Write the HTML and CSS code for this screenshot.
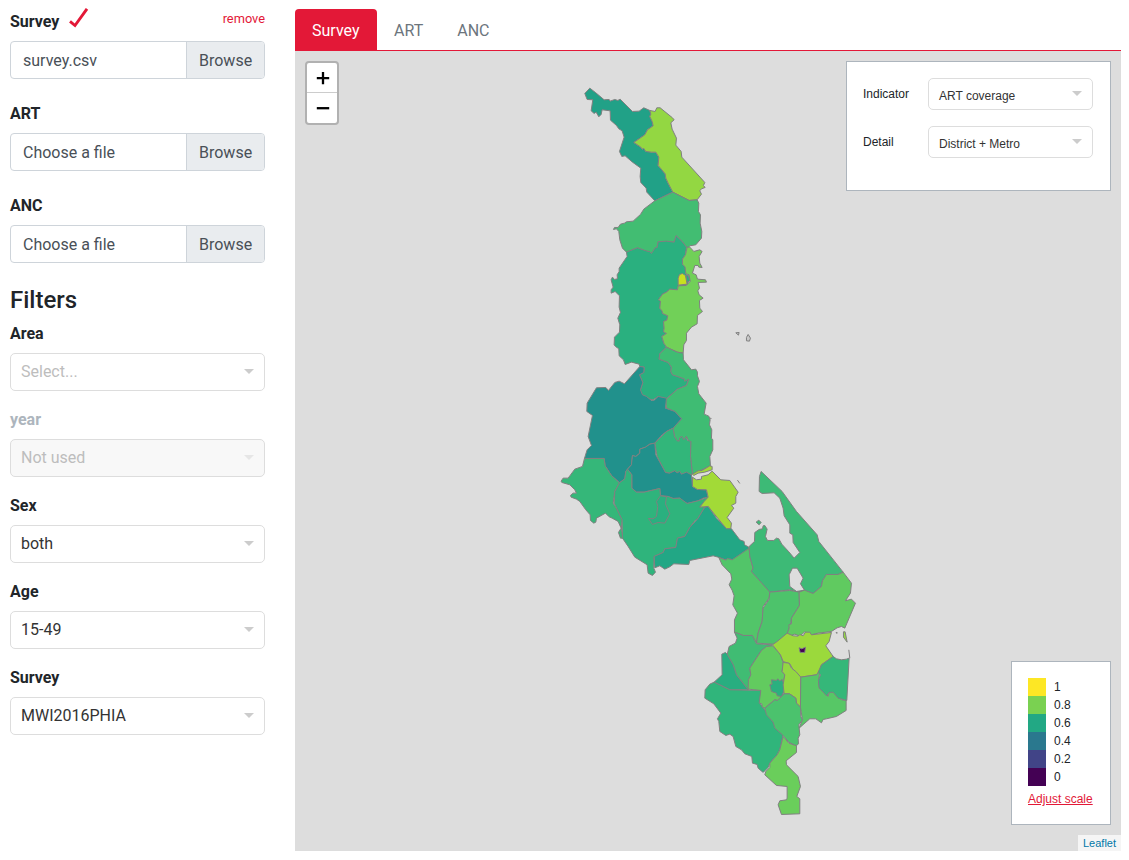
FILE: index.html
```html
<!DOCTYPE html>
<html lang="en">
<head>
<meta charset="utf-8">
<title>Survey map</title>
<link rel="stylesheet" href="styles.css">
</head>
<body>
<div class="page">
  <aside class="sidebar">
    <section class="upload">
      <div class="label-row"><label class="label">Survey</label><svg class="tick" width="20" height="20" viewBox="0 0 20 20"><path d="M1 13.3 6 17.5 18 .8" fill="none" stroke="#e31837" stroke-width="2.9"/></svg><a class="remove">remove</a></div>
      <div class="file"><span class="file-name">survey.csv</span><span class="browse">Browse</span></div>
    </section>
    <section class="upload">
      <div class="label-row"><label class="label">ART</label></div>
      <div class="file"><span class="file-name">Choose a file</span><span class="browse">Browse</span></div>
    </section>
    <section class="upload">
      <div class="label-row"><label class="label">ANC</label></div>
      <div class="file"><span class="file-name">Choose a file</span><span class="browse">Browse</span></div>
    </section>
    <h2 class="heading">Filters</h2>
    <section class="filter"><label class="label">Area</label><div class="select placeholder"><span>Select...</span><i class="arrow"></i></div></section>
    <section class="filter disabled"><label class="label">year</label><div class="select placeholder"><span>Not used</span><i class="arrow"></i></div></section>
    <section class="filter"><label class="label">Sex</label><div class="select"><span>both</span><i class="arrow"></i></div></section>
    <section class="filter"><label class="label">Age</label><div class="select"><span>15-49</span><i class="arrow"></i></div></section>
    <section class="filter"><label class="label">Survey</label><div class="select"><span>MWI2016PHIA</span><i class="arrow"></i></div></section>
  </aside>
  <main class="content">
    <nav class="tabs"><a class="tab active">Survey</a><a class="tab">ART</a><a class="tab">ANC</a></nav>
    <div class="map">
      <svg class="regions" width="826" height="800" viewBox="295 51 826 800">
        <g transform="translate(569.8 79.8) scale(.33333)">
          <path fill="#21a187" d="M45 41 60 25 78 39 103 60 118 59 121 64 135 59 144 62 151 58 188 95 208 94 222 84 240 92 243 103 240 110 247 125 250 138 233 150 225 165 192 188 213 202 217 208 222 206 228 215 245 217 258 217 267 232 265 257 286 282 288 295 295 310 309 337 255 363 231 337 229 325 213 308 211 290 213 265 188 247 166 228 156 230 149 215 163 172 157 153 147 147 140 137 122 121 121 93 97 90 94 104 87 111 79 97 73 101 64 93 69 60 52 59Z"/>
          <path fill="#93d742" d="M240 92 256 95 261 84 271 84 308 114 313 120 303 129 307 148 320 175 318 196 334 215 336 232 405 308 401 317 406 323 395 327 390 333 395 343 382 360 358 362 309 337 295 310 288 295 286 282 265 257 267 232 258 217 245 217 228 215 222 206 217 208 213 202 192 188 225 165 233 150 250 138 247 125 240 110 243 103Z"/>
          <path fill="#42bd72" d="M309 337 358 362 382 360 387 370 386 395 392 405 391 430 396 455 395 475 378 495 360 498 355 504 350 502 337 485 319 468 313 487 265 486 262 503 245 521 203 504 170 517 158 505 150 480 147 455 140 447 131 449 134 443 145 443 152 433 164 430 170 426 190 424 212 404 222 388 255 363Z"/>
        </g>
        <g transform="translate(569.8 229.8) scale(.33333)">
          <path fill="#2ab07f" d="M170 67 203 54 228 63 240 66 245 71 256 54 262 53 265 36 290 34 313 37 319 18 337 35 350 52 347 75 338 88 338 103 346 112 348 132 360 150 350 166 325 168 323 180 300 178 290 187 278 193 266 210 272 214 270 235 277 244 278 251 294 258 291 271 281 275 283 295 281 306 290 311 276 320 282 340 290 352 270 372 268 388 295 398 305 412 303 425 308 435 325 440 343 447 345 454 357 446 350 467 323 478 288 508 265 500 250 510 235 507 218 497 212 490 212 480 219 458 209 435 222 428 223 412 210 410 208 403 185 397 166 404 161 390 148 378 147 357 137 350 133 345 134 322 149 307 150 285 144 265 152 248 148 232 149 198 136 185 124 190 124 180 130 172 124 150 128 142 134 149 143 147 142 135 148 125 148 115 172 80Z"/>
          <path fill="#71d058" d="M352 52 360 52 372 65 390 60 397 65 388 80 390 100 397 113 387 112 385 107 375 107 368 130 379 135 383 148 407 150 410 157 385 158 389 175 384 183 388 195 400 205 389 212 390 235 398 245 383 257 382 282 365 292 350 310 350 332 342 345 340 370 322 367 290 352 282 340 276 320 290 311 281 306 283 295 281 275 291 271 294 258 278 251 277 244 270 235 272 214 266 210 278 193 290 187 300 178 323 180 325 168 350 167 361 155 358 135 348 132 346 112 338 103 338 88 347 75Z"/>
          <path fill="#2ab07f" d="M349 140 355 135 360 153 352 157Z"/>
          <path fill="#c8e020" d="M325 145 329 134 338 131 347 137 352 163 325 166Z"/>
          <path class="islet" d="M498 309 508 308 506 316ZM530 323 535 314 542 325 539 334 530 333Z"/>
        </g>
        <g transform="translate(549.8 359.8) scale(.33333)">
          <path fill="#3fbc73" d="M350 -38 382 -23 400 -20 401 0 425 30 438 28 443 37 443 48 449 65 443 80 447 102 469 130 463 163 477 169 481 180 479 195 486 210 485 235 489 240 489 270 480 290 482 318 428 343 422 290 423 245 418 247 410 230 402 240 396 230 390 234 388 244 382 243 374 230 370 205 395 177 375 155 350 145 347 120 383 88 410 77 417 58 405 64 403 57 368 45 363 35 365 22 355 8 328 -2 330 -18Z"/>
          <path fill="#21918c" d="M283 22 270 20 224 72 208 64 195 68 176 92 168 83 140 84 112 130 111 155 128 167 115 230 125 257 112 270 104 296 163 296 166 318 185 347 209 369 225 357 228 335 233 328 245 315 248 287 258 290 270 280 270 268 287 262 300 253 315 250 335 227 350 215 370 205 395 177 375 155 347 145 350 115 325 110 313 121 305 122 290 110 278 105 272 90 279 68 269 45 282 38Z"/>
          <path fill="#32b67a" d="M315 250 350 215 370 205 374 230 382 243 388 244 390 234 396 230 402 240 410 230 412 241 423 245 422 290 428 343 410 347 395 343 390 335 382 339 375 333 359 340 347 338 322 290Z"/>
          <path fill="#21918c" d="M315 250 318 285 347 338 359 340 375 333 382 339 390 335 395 343 410 337 425 345 428 380 443 389 470 390 475 412 460 415 445 423 412 431 402 425 390 415 370 416 355 410 332 408 330 386 283 397 260 397 246 385 246 345 233 328 245 315 248 287 258 290 270 280 270 268 287 262 300 253Z"/>
          <path fill="#35b779" d="M104 296 163 296 166 318 185 347 209 369 195 395 190 430 203 450 217 480 215 505 219 535 212 535 206 518 214 505 205 485 187 475 178 471 167 460 140 475 138 487 132 490 122 482 121 465 108 450 90 425 80 418 64 412 62 407 70 400 80 400 75 390 60 375 36 368 34 364 40 355 55 355 75 328 98 320Z"/>
          <path fill="#2fb47c" d="M209 369 225 357 228 335 233 328 246 345 246 385 260 397 283 397 330 386 332 408 355 410 370 416 390 415 412 431 445 423 475 412 475 420 450 440 465 442 445 475 435 483 420 503 405 530 383 535 378 563 345 567 340 578 313 590 312 625 317 637 308 647 295 640 292 615 255 592 235 560 218 535 217 480 193 430 195 395Z"/>
          <path fill="#2ab07f" d="M332 408 350 411 347 432 360 462 345 490 325 488 308 494 296 476 310 477 320 470 324 440 320 425Z"/>
          <path fill="#a2da37" d="M428 343 445 333 457 332 480 318 487 320 487 330 465 337 445 340 432 347ZM428 352 440 360 455 358 455 350 475 345 487 334 513 360 540 362 565 397 558 410 558 430 545 437 552 445 532 473 545 490 543 507 530 507 475 440 450 442 463 425 475 412 470 390 443 389 428 380Z"/>
          <path fill="#22a785" d="M465 442 475 440 500 475 530 507 545 507 570 540 583 545 584 555 597 562 598 568 550 602 540 597 535 603 505 592 490 588 420 602 417 614 372 612 360 621 345 628 330 618 315 624 313 590 340 578 345 567 378 563 383 535 405 530 420 503 445 475Z"/>
          <path fill="none" d="M563 361 570 371M480 175 485 176"/>
        </g>
        <g transform="translate(699.8 459.8) scale(.33333)">
          <path fill="#52c569" d="M148 265 97 300 82 296 79 301 57 293 67 315 93 342 96 358 88 375 97 391 103 408 99 435 113 460 104 480 104 517 130 527 155 527 170 548 175 520 187 485 190 440 208 415 210 395 155 335 160 325 150 290Z"/>
          <path fill="#3dba76" fill-rule="evenodd" d="M148 260 164 245 165 218 178 209 188 207 190 198 195 197 202 208 197 230 203 242 222 242 230 235 237 237 246 253 267 276 283 295 300 278 280 248 279 225 270 220 270 195 253 168 250 145 240 115 223 99 187 101 178 95 179 50 184 35 247 95 290 155 352 225 357 245 430 337 415 344 380 344 368 363 365 380 340 401 320 396 298 397 270 390 210 397 155 335 160 325 150 290ZM268 345 278 325 292 325 310 355 302 372 314 391 290 395 270 380Z"/>
          <path fill="#4dc36b" d="M210 397 270 392 298 397 299 437 275 475 272 495 262 522 240 545 220 553 170 550 175 520 187 485 190 445 208 418Z"/>
          <path fill="#60ca60" d="M298 397 314 391 340 401 365 380 368 363 380 344 415 344 430 337 455 370 452 400 437 423 455 418 467 430 435 505 425 500 412 504 395 515 355 520 330 526 315 516 300 529 285 523 275 527 262 522 268 505 267 495 275 492 275 475 299 437Z"/>
          <path fill="#3dba76" d="M169 187 177 181 184 188 178 195Z"/>
          <path fill="#93d742" d="M431 516 436 516 442 547 431 532Z"/>
          <path class="islet" d="M409 518 412 518 411 521Z"/>
        </g>
        <g transform="translate(689.8 619.8) scale(.33333)">
          <path fill="#40bc73" d="M134 37 160 47 188 47 200 72 248 75 215 92 180 145 183 165 175 210 140 165 130 135 112 105 118 80 137 70 142 55Z"/>
          <path fill="#28ae80" d="M112 103 130 135 140 165 175 210 120 210 73 187 97 165 96 103 107 98Z"/>
          <path fill="#30b57b" d="M73 187 120 210 213 212 210 250 225 270 255 315 280 345 270 390 262 405 240 430 235 443 220 458 205 445 202 434 188 430 186 410 165 402 155 390 138 380 130 350 120 343 108 347 90 335 87 305 83 297 93 280 72 252 45 235 46 210 60 193Z"/>
          <path fill="#62cb5f" d="M248 78 265 95 272 105 280 128 277 155 285 165 280 195 280 228 263 242 255 240 225 265 217 262 216 252 208 250 213 212 175 208 176 180 183 165 180 145 215 92 230 80Z"/>
          <path fill="#2ab07f" d="M240 195 247 193 245 180 260 182 264 177 270 184 277 179 281 190 282 215 275 230 262 228 260 220 245 215Z"/>
          <path fill="#9bd93c" d="M248 75 262 65 292 40 310 48 325 49 330 44 340 48 347 37 360 37 365 45 425 38 418 65 408 78 430 110 395 135 392 150 380 165 333 172 310 150 300 132 280 125 272 105Z"/>
          <path fill="#93d742" d="M280 128 298 130 305 145 318 155 333 172 332 262 320 250 318 235 299 222 283 222 280 195 285 165 277 155Z"/>
          <path fill="#4bc26d" d="M225 265 255 240 263 242 283 222 299 222 318 235 320 250 332 262 333 290 338 300 327 315 330 345 325 355 326 372 320 378 298 368 278 345 255 325 250 307 230 285Z"/>
          <path fill="#57c766" d="M333 172 380 165 390 152 386 190 390 208 405 215 415 230 418 218 430 215 455 240 469 242 469 272 440 290 410 297 400 299 395 309 378 297 360 297 328 325 338 300 332 262Z"/>
          <path fill="#35b779" d="M430 110 440 117 455 120 470 118 478 115 471 242 445 235 430 217 418 218 410 228 403 220 388 205 386 182 392 165 385 157 395 135Z"/>
          <path fill="#6ace5b" d="M280 350 297 370 320 378 320 398 289 423 290 435 325 470 332 500 321 530 330 537 330 582 275 584 265 555 270 543 290 540 292 535 292 500 260 497 225 465 228 455 240 443 240 430 262 405 270 390Z"/>
          <path fill="#440154" d="M328 84 336 87 347 82 345 98 331 98Z"/>
          <path fill="none" d="M477 90 480 115"/>
        </g>
      </svg>
      <div class="zoom"><a class="zoom-btn"><svg width="30" height="30" viewBox="0 0 30 30"><path d="M9.8 15.2H22.2M16 9V21.3" stroke="#000" stroke-width="2.3"/></svg></a><a class="zoom-btn"><svg width="30" height="30" viewBox="0 0 30 30"><path d="M9.8 15.2H22.2" stroke="#000" stroke-width="2.3"/></svg></a></div>
      <div class="panel options">
        <div class="option"><span class="option-label">Indicator</span><div class="select small"><span>ART coverage</span><i class="arrow"></i></div></div>
        <div class="option"><span class="option-label">Detail</span><div class="select small"><span>District + Metro</span><i class="arrow"></i></div></div>
      </div>
      <div class="panel legend">
        <div class="level"><i class="swatch s5"></i>1</div>
        <div class="level"><i class="swatch s4"></i>0.8</div>
        <div class="level"><i class="swatch s3"></i>0.6</div>
        <div class="level"><i class="swatch s2"></i>0.4</div>
        <div class="level"><i class="swatch s1"></i>0.2</div>
        <div class="level"><i class="swatch s0"></i>0</div>
        <a class="adjust">Adjust scale</a>
      </div>
      <div class="attribution">Leaflet</div>
    </div>
  </main>
</div>
</body>
</html>
```
FILE: styles.css
```css
* { box-sizing: border-box; }
body { margin: 0; font: 16px/24px Roboto, sans-serif; color: #212529; background: #fff; }
.page { display: grid; grid-template-columns: 255px 826px; column-gap: 30px; padding: 9px 8px 0 10px; height: 860px; overflow: hidden; }
.label { font-weight: 700; line-height: 24px; padding-top: 1px; display: block; }
.upload { height: 92px; }
.label-row { display: flex; height: 32px; }
.tick { margin: -1px 0 0 10px; }
.remove { margin-left: auto; font-size: 12.8px; line-height: 20px; color: #e31837; }
.file { display: flex; height: 38px; border: 1px solid #ced4da; border-radius: 4px; color: #495057; line-height: 38px; overflow: hidden; }
.file-name { flex: 1; padding-left: 12px; }
.browse { width: 78px; padding-left: 12px; background: #e9ecef; border-left: 1px solid #ced4da; }
.heading { margin: 0 0 6px; padding-top: 1px; font-size: 24px; font-weight: 500; line-height: 29px; }
.filter { height: 86px; }
.filter .label { height: 32px; }
.disabled .label { color: #adb5bd; }
.select { display: flex; align-items: center; justify-content: space-between; height: 38px; padding: 0 10px; border: 1px solid #ddd; border-radius: 5px; color: #333; background: #fff; }
.placeholder { color: #bdbdbd; }
.disabled .select { background: #f8f8f8; }
.arrow { border: 5px solid transparent; border-top-color: #ccc; border-bottom: 0; margin-bottom: 1px; }
.disabled .arrow { border-top-color: #e6e6e6; }
.tabs { display: flex; height: 42px; border-bottom: 1px solid #e31837; }
.tab { padding: 9px 16px 8px; border: 1px solid transparent; border-bottom: 0; color: #6c757d; }
.tab.active { width: 82px; background: #e31837; color: #fff; border-radius: 4px 4px 0 0; }
.map { position: relative; height: 800px; background: #ddd; font: 12px/18px "Liberation Sans", Arial, sans-serif; overflow: hidden; }
.regions { display: block; }
.regions path { stroke: #808080; stroke-width: 1; stroke-linejoin: round; vector-effect: non-scaling-stroke; }
.regions .islet { fill: #c8c8c8; }
.zoom { position: absolute; left: 10px; top: 10px; border: 2px solid #b1b1b1; border-radius: 4px; background: #fff; }
.zoom-btn { display: block; width: 30px; height: 30px; overflow: hidden; }
.zoom-btn svg { display: block; }
.zoom-btn:first-child { border-bottom: 1px solid #ccc; }
.panel { position: absolute; right: 10px; padding: 16px; border: 1px solid #adb5bd; background: #fff; }
.options { top: 10px; width: 265px; height: 130px; }
.option { display: flex; height: 48px; }
.option-label { width: 65px; line-height: 32px; }
.small { width: 165px; height: 32px; }
.small span { padding-top: 4px; }
.legend { bottom: 26px; width: 100px; height: 164px; }
.level { display: flex; gap: 8px; }
.swatch { width: 18px; height: 18px; }
.s5 { background: #fde725; }
.s4 { background: #7ad151; }
.s3 { background: #22a884; }
.s2 { background: #2a788e; }
.s1 { background: #414487; }
.s0 { background: #440154; }
.adjust { display: block; margin-top: 4px; color: #e31837; text-decoration: underline; white-space: nowrap; }
.attribution { position: absolute; right: 0; bottom: 0; padding: 0 5px; height: 16px; font-size: 11px; line-height: 16px; color: #0078a8; background: rgba(255,255,255,.7); }
```
